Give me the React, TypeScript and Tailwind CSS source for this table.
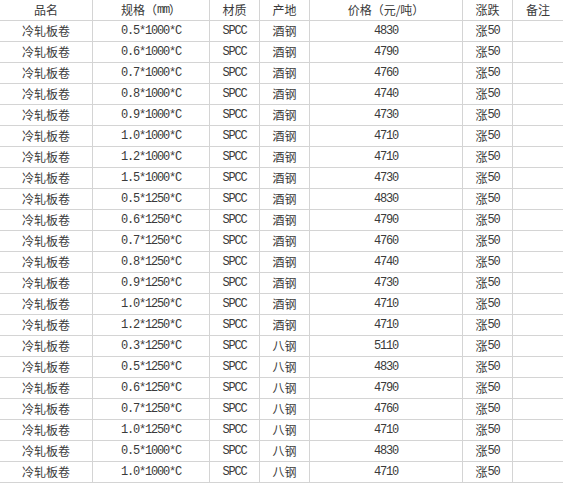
import React from "react";

const rows: [string, string, string][] = [
  ["0.5*1000*C", "酒钢", "4830"],
  ["0.6*1000*C", "酒钢", "4790"],
  ["0.7*1000*C", "酒钢", "4760"],
  ["0.8*1000*C", "酒钢", "4740"],
  ["0.9*1000*C", "酒钢", "4730"],
  ["1.0*1000*C", "酒钢", "4710"],
  ["1.2*1000*C", "酒钢", "4710"],
  ["1.5*1000*C", "酒钢", "4730"],
  ["0.5*1250*C", "酒钢", "4830"],
  ["0.6*1250*C", "酒钢", "4790"],
  ["0.7*1250*C", "酒钢", "4760"],
  ["0.8*1250*C", "酒钢", "4740"],
  ["0.9*1250*C", "酒钢", "4730"],
  ["1.0*1250*C", "酒钢", "4710"],
  ["1.2*1250*C", "酒钢", "4710"],
  ["0.3*1250*C", "八钢", "5110"],
  ["0.5*1250*C", "八钢", "4830"],
  ["0.6*1250*C", "八钢", "4790"],
  ["0.7*1250*C", "八钢", "4760"],
  ["1.0*1250*C", "八钢", "4710"],
  ["0.5*1000*C", "八钢", "4830"],
  ["1.0*1000*C", "八钢", "4710"],
];

const cjk = "font-['Noto_Sans_CJK_SC',sans-serif]";
const mono = "font-['Liberation_Mono','Noto_Sans_CJK_SC',monospace] text-[12px] tracking-[-1.2px]";
const cell = "h-[21px] flex items-center justify-center border-b border-r border-[#d4d4d4] whitespace-nowrap overflow-hidden";
const last = "h-[21px] flex items-center justify-center border-b border-[#d4d4d4] whitespace-nowrap overflow-hidden";

export default function App() {
  return (
    <div className={`w-[563px] h-[486px] bg-white text-[#3a3a3a] text-[12px] leading-none ${cjk}`}>
      <div className="grid grid-cols-[93px_117px_50px_50px_153px_50px_1fr]">
        <div className={cell}>品名</div>
        <div className={cell}>
          规格（<span className={mono}>mm</span>）
        </div>
        <div className={cell}>材质</div>
        <div className={cell}>产地</div>
        <div className={cell}>价格（元/吨）</div>
        <div className={cell}>涨跌</div>
        <div className={last}>备注</div>
        {rows.map(([spec, origin, price], i) => (
          <React.Fragment key={i}>
            <div className={cell}>冷轧板卷</div>
            <div className={cell}>
              <span className={mono}>{spec}</span>
            </div>
            <div className={cell}>
              <span className={mono}>SPCC</span>
            </div>
            <div className={cell}>{origin}</div>
            <div className={cell}>
              <span className={mono}>{price}</span>
            </div>
            <div className={cell}>
              涨<span className={mono}>50</span>
            </div>
            <div className={last}></div>
          </React.Fragment>
        ))}
      </div>
    </div>
  );
}
